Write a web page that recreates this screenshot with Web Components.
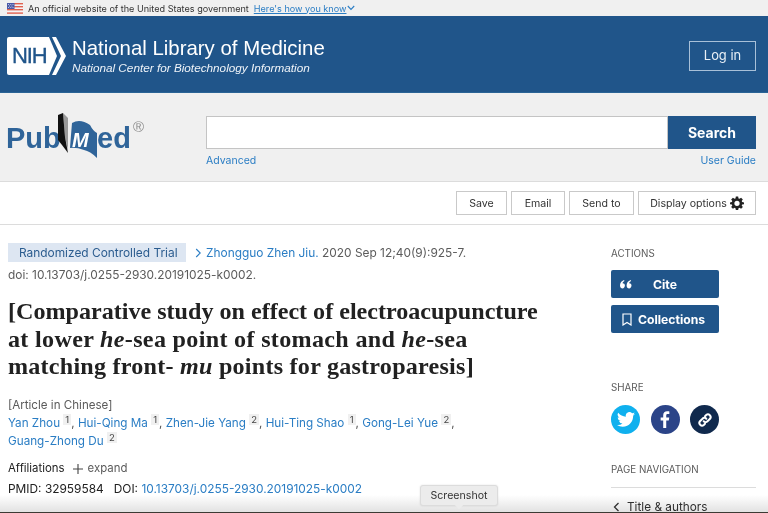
<!DOCTYPE html>
<html lang="en"><head><meta charset="utf-8"><title>PubMed</title>
<style>
html,body{margin:0;padding:0;background:#fff}
body{width:768px;height:513px;overflow:hidden;position:relative;font-family:Inter,"Liberation Sans",sans-serif;color:#212121}
</style></head><body>
<gov-banner></gov-banner>
<nih-header></nih-header>
<search-area></search-area>
<action-bar></action-bar>
<page-main>
  <article-body></article-body>
  <side-bar></side-bar>
</page-main>
<bottom-fade></bottom-fade>
<shot-tip>Screenshot</shot-tip>
<script>
function def(name,html){customElements.define(name,class extends HTMLElement{constructor(){super();this.attachShadow({mode:'open'}).innerHTML=html}})}
def('gov-banner',`<style>:host{display:flex;align-items:center;height:16px;background:#f0f0f0;padding-left:7px;font:400 9.1px/16px Inter,"Liberation Sans",sans-serif;color:#333;box-sizing:border-box}
span{position:relative;top:.5px}svg{display:block;margin-right:5px}a{color:#2a7dc4;text-decoration:underline;margin-left:5px;position:relative;top:.5px}</style>
<svg width="16" height="11" viewBox="0 0 16 11"><rect width="16" height="11" fill="#f4f4f6"/><g fill="#e0614f"><rect width="16" height="1.4" y="0"/><rect width="16" height="1.4" y="3"/><rect width="16" height="1.4" y="6"/><rect width="16" height="1.4" y="9.4"/></g><rect width="7.5" height="6" fill="#4a5aa8"/><g fill="#dfe3f2"><circle cx="1.5" cy="1.5" r=".5"/><circle cx="3.8" cy="1.5" r=".5"/><circle cx="6" cy="1.5" r=".5"/><circle cx="2.6" cy="3" r=".5"/><circle cx="4.9" cy="3" r=".5"/><circle cx="1.5" cy="4.5" r=".5"/><circle cx="3.8" cy="4.5" r=".5"/><circle cx="6" cy="4.5" r=".5"/></g></svg>
<span>An official website of the United States government</span><a>Here's how you know</a><svg style="margin:0 0 0 1px" width="8" height="6" viewBox="0 0 8 6"><path d="M.8 1l3.2 3.4L7.2 1" fill="none" stroke="#2a7dc4" stroke-width="1.1"/></svg>`);
def('nih-header',`<style>:host{display:flex;align-items:center;height:77px;box-sizing:border-box;background:#20558a;border-bottom:1px solid #2a6496;padding:0 12px 0 7px;color:#fff;font-family:"Liberation Sans",Arimo,sans-serif}
.logo{position:relative;width:59px;height:38px;margin-right:6px;margin-top:3px;flex:none}
.logo svg{position:absolute;inset:0}
.logo span{position:absolute;left:5px;top:0;line-height:38px;font-size:22px;letter-spacing:-1.1px;color:#20558a;font-weight:400;-webkit-text-stroke:.35px #20558a}
.t{flex:1;margin-top:3px}.a{font-size:20.4px;line-height:25px}.b{font-size:11.75px;font-style:italic;line-height:14px;color:#eef3f8}
.login{width:67px;height:30px;border:1px solid #a8c0d8;box-sizing:border-box;display:flex;align-items:center;justify-content:center;font:400 12.9px Inter,"Liberation Sans",sans-serif;color:#e9f0f6;margin-top:3px}</style>
<div class="logo"><svg width="59" height="38" viewBox="0 0 59 38"><path d="M2 0H42L50 19L42 38H2Q0 38 0 36V2Q0 0 2 0Z" fill="#fff"/><path d="M45 0H49L59 19L49 38H45L54 19Z" fill="#fff"/></svg><span>NIH</span></div>
<div class="t"><div class="a">National Library of Medicine</div><div class="b">National Center for Biotechnology Information</div></div>
<div class="login">Log in</div>`);
def('search-area',`<style>:host{display:block;height:89px;box-sizing:border-box;background:#f0f0f0;border-bottom:1px solid #dcdcdc;position:relative;font-family:Inter,"Liberation Sans",sans-serif}
.wrap{display:flex;height:100%}
.logo{width:206px;flex:none;position:relative}
.pub,.ed{position:absolute;top:27px;font:700 29px/36px "Liberation Sans",sans-serif;color:#2f6499}
.pub{left:6px}.ed{left:97px}
.logo svg{position:absolute;left:54px;top:10px}
.reg{position:absolute;left:133px;top:25px;font:400 15px/18px "Liberation Sans",sans-serif;color:#8e8e8e}
.s{flex:1;padding:23px 12px 0 0}
.row{display:flex;height:33px}
.in{flex:1;background:#fff;border:1px solid #c4c4c4;box-sizing:border-box}
.btn{width:88px;background:#20558a;color:#fff;font-weight:700;font-size:14px;display:flex;align-items:center;justify-content:center}
.l{display:flex;justify-content:space-between;font-size:10.5px;color:#2a7dc4;line-height:14px;margin-top:5px}</style>
<div class="wrap"><div class="logo"><span class="pub">Pub</span>
<svg width="46" height="58" viewBox="0 0 46 58"><path d="M9 10L14 15L14 47L11 34Z" fill="#9a9a9a"/><path d="M4 12L9 10L11 34L14 50L8 42L4 37Z" fill="#111"/><path d="M18 20Q26 15 36 22Q39 28 43 30L43 55Q36 48 30 47Q22 44 16 45L17 32Z" fill="#2f6499"/><text x="18" y="44" font-family="Liberation Sans" font-weight="700" font-style="italic" font-size="20" fill="#fff">M</text></svg>
<span class="ed">ed</span><span class="reg">®</span></div>
<div class="s"><div class="row"><div class="in"></div><div class="btn">Search</div></div><div class="l"><span>Advanced</span><span>User Guide</span></div></div></div>`);
def('plain-btn',`<style>:host{display:flex;align-items:center;justify-content:center;height:24px;box-sizing:border-box;border:1px solid #c9c9c9;background:#fff;font:400 10.6px Inter,"Liberation Sans",sans-serif;color:#333;gap:3px;padding-top:1px}</style><slot></slot>`);
def('action-bar',`<style>:host{display:flex;justify-content:flex-end;align-items:center;gap:4px;height:43px;box-sizing:border-box;border-bottom:1px solid #dcdcdc;padding:0 12px 1px 0;background:#fff}</style>
<plain-btn style="width:51px">Save</plain-btn><plain-btn style="width:54px">Email</plain-btn><plain-btn style="width:65px">Send to</plain-btn><plain-btn style="width:118px">Display options <svg width="14" height="14" viewBox="0 0 24 24"><path fill="#222" d="M10 1h4l.6 3.2 1.7.7L19 3l3 3-1.9 2.7.7 1.7L24 11v3l-3.2.6-.7 1.7L22 19l-3 3-2.7-1.9-1.7.7L14 24h-4l-.6-3.2-1.7-.7L5 22l-3-3 1.9-2.7-.7-1.7L0 14v-3l3.2-.6.7-1.7L2 6l3-3 2.7 1.9 1.7-.7zM12 8a4.5 4.5 0 100 9 4.5 4.5 0 000-9z" fill-rule="evenodd"/></svg></plain-btn>`);
def('page-main',`<style>:host{display:flex;padding:0 12px 0 8px;height:288px;overflow:hidden;position:relative}</style><slot></slot>`);
def('article-body',`<style>:host{display:block;width:603px;flex:none;padding-top:19px;font:400 11.9px/17px Inter,"Liberation Sans",sans-serif;color:#5b5b5b}
a{color:#2a7dc4;text-decoration:none}
.top{display:flex;align-items:center;height:17px;white-space:nowrap}
.tag{background:#dde6f2;color:#2b5c8f;padding:0 0 0 11px;height:19px;line-height:19px;width:178px;flex:none;box-sizing:border-box;margin-right:9px}
.arr{margin-right:4px}
.doi{margin-top:5px}
h1{margin:15px 0 0;width:560px;font:700 24.1px/27.7px "Liberation Serif",serif;color:#212121;white-space:nowrap}
h1 i{font-weight:700}
h1 span{display:block}
.l2{letter-spacing:.32px}.l3{letter-spacing:.24px}
.lang{margin-top:16px;line-height:17px;font-size:11.6px}
.auth{line-height:18px;font-size:11.7px;color:#555;width:500px}
sup{display:inline-block;background:#f0f0f0;color:#444;font-size:9.5px;line-height:11px;padding:0 2px;vertical-align:4px}
.aff{margin-top:10px;color:#212121;display:flex;align-items:center;font-size:11.4px}
.exp{color:#5b5b5b;margin-left:8px;display:flex;align-items:center;gap:5px}
.ids{margin-top:3px;color:#212121;line-height:18px}</style>
<div class="top"><span class="tag">Randomized Controlled Trial</span><svg class="arr" width="7" height="10" viewBox="0 0 7 10"><path d="M1.2 1L5.2 5L1.2 9" fill="none" stroke="#2a7dc4" stroke-width="1.1"/></svg><a>Zhongguo Zhen Jiu.</a>&nbsp;2020 Sep 12;40(9):925-7.</div>
<div class="doi">doi: 10.13703/j.0255-2930.20191025-k0002.</div>
<h1><span>[Comparative study on effect of electroacupuncture</span><span class="l2">at lower <i>he</i>-sea point of stomach and <i>he</i>-sea</span><span class="l3">matching front- <i>mu</i> points for gastroparesis]</span></h1>
<div class="lang">[Article in Chinese]</div>
<div class="auth"><a>Yan Zhou</a> <sup>1</sup>, <a>Hui-Qing Ma</a> <sup>1</sup>, <a>Zhen-Jie Yang</a> <sup>2</sup>, <a>Hui-Ting Shao</a> <sup>1</sup>, <a>Gong-Lei Yue</a> <sup>2</sup>,<br><a>Guang-Zhong Du</a> <sup>2</sup></div>
<div class="aff"><span>Affiliations</span><span class="exp"><svg width="10" height="10" viewBox="0 0 10 10"><path d="M5 0v10M0 5h10" stroke="#444" stroke-width="1.1"/></svg>expand</span></div>
<div class="ids">PMID: 32959584 &nbsp; DOI: <a>10.13703/j.0255-2930.20191025-k0002</a></div>`);
def('blue-btn',`<style>:host{display:flex;align-items:center;width:108px;height:28px;background:#20558a;border-radius:2px;color:#fff;font:700 12.2px Inter,"Liberation Sans",sans-serif;box-sizing:border-box}</style><slot></slot>`);
def('side-bar',`<style>:host{display:block;width:145px;flex:none;font:400 9.8px/14px Inter,"Liberation Sans",sans-serif;color:#5b5b5b}
.h{margin-top:22px}.h2{margin-top:48px}
.col{display:flex;flex-direction:column;gap:7px;margin-top:9px}
.soc{display:flex;gap:10.500px;margin-top:10px}
.soc span{width:29px;height:29px;border-radius:50%;display:flex;align-items:center;justify-content:center}
.h3{margin-top:29px}
hr{border:0;border-top:1px solid #dcdcdc;margin:10px 0 0}
.nav{display:flex;align-items:center;gap:7px;font-size:11.8px;color:#333;line-height:14px;margin-top:12px;padding-left:2px}</style>
<div class="h">ACTIONS</div>
<div class="col">
<blue-btn><svg style="margin-left:9px" width="12" height="9" viewBox="0 0 12 9"><path fill="#fff" d="M0 5.5C0 2.8 1.5 1 4 0l.5 1C3.3 1.600 2.700 2.400 2.600 3.200 3.800 3.200 4.900 4 4.900 5.500S3.800 8.500 2.500 8.500 0 7.500 0 5.500zM6.600 5.500C6.600 2.800 8.100 1 10.600 0l.5 1C9.900 1.600 9.300 2.400 9.200 3.200c1.200 0 2.300.800 2.300 2.300s-1.100 3-2.400 3S6.600 7.500 6.600 5.500z"/></svg><span style="margin-left:21px">Cite</span></blue-btn>
<blue-btn><svg style="margin-left:11px" width="10" height="13" viewBox="0 0 10 13"><path d="M1 1h8v11L5 9.500 1 12z" fill="none" stroke="#fff" stroke-width="1.2"/></svg><span style="margin-left:6px">Collections</span></blue-btn>
</div>
<div class="h2">SHARE</div>
<div class="soc">
<span style="background:#0fb0ee"><svg width="18" height="15" viewBox="0 0 24 20"><path fill="#fff" d="M24 2.400a9.800 9.800 0 01-2.800.8A4.900 4.900 0 0023.300.5a9.900 9.900 0 01-3.100 1.200 4.900 4.900 0 00-8.400 4.500A14 14 0 011.700.9a4.900 4.900 0 001.500 6.600 4.900 4.900 0 01-2.200-.6v.1a4.900 4.900 0 003.900 4.800 4.900 4.900 0 01-2.200.1 4.900 4.900 0 004.600 3.400A9.900 9.900 0 010 17.300 14 14 0 007.500 19.500c9.100 0 14-7.500 14-14v-.6A10 10 0 0024 2.400z"/></svg></span>
<span style="background:#2b4488"><svg width="10" height="17" viewBox="0 0 10 18"><path fill="#fff" d="M6.300 18V10h2.700l.5-3.200H6.300V4.800c0-.9.300-1.500 1.600-1.500H9.600V.4C9.300.3 8.300.2 7.200.2 4.800.2 3.100 1.700 3.100 4.400v2.400H.4V10h2.700v8z"/></svg></span>
<span style="background:#10294d"><svg width="16" height="16" viewBox="0 0 16 16" fill="none" stroke="#fff" stroke-width="2" stroke-linecap="round"><path d="M6.700 9.300a2.600 2.600 0 003.800 0l2.500-2.500a2.700 2.700 0 00-3.800-3.800L8 4.200"/><path d="M9.300 6.700a2.600 2.600 0 00-3.800 0L3 9.200A2.700 2.700 0 006.800 13L8 11.800"/></svg></span>
</div>
<div class="h3">PAGE NAVIGATION</div><hr>
<div class="nav"><svg width="7" height="10" viewBox="0 0 7 10"><path d="M5.500 1L1.500 5L5.500 9" fill="none" stroke="#333" stroke-width="1.300"/></svg><span>Title &amp; authors</span></div>`);
def('bottom-fade',`<style>:host{position:absolute;left:0;right:0;bottom:0;height:18px;background:linear-gradient(to bottom,#fff,#e2e2e2 94%,#3c3a34 94.500%,#3c3a34);mix-blend-mode:multiply;pointer-events:none}</style>`);
def('shot-tip',`<style>:host{position:absolute;left:420px;top:485px;width:78px;height:21px;background:#ececec;border:1px solid #dcdcdc;border-radius:3px;box-sizing:border-box;font:400 10.6px/19px Inter,"Liberation Sans",sans-serif;color:#333;text-align:center;box-shadow:0 0 2px rgba(0,0,0,.12)}
i{position:absolute;left:35px;top:16px;width:6px;height:6px;background:#ececec;transform:rotate(45deg)}</style><slot></slot><i></i>`);
</script>
</body></html>
